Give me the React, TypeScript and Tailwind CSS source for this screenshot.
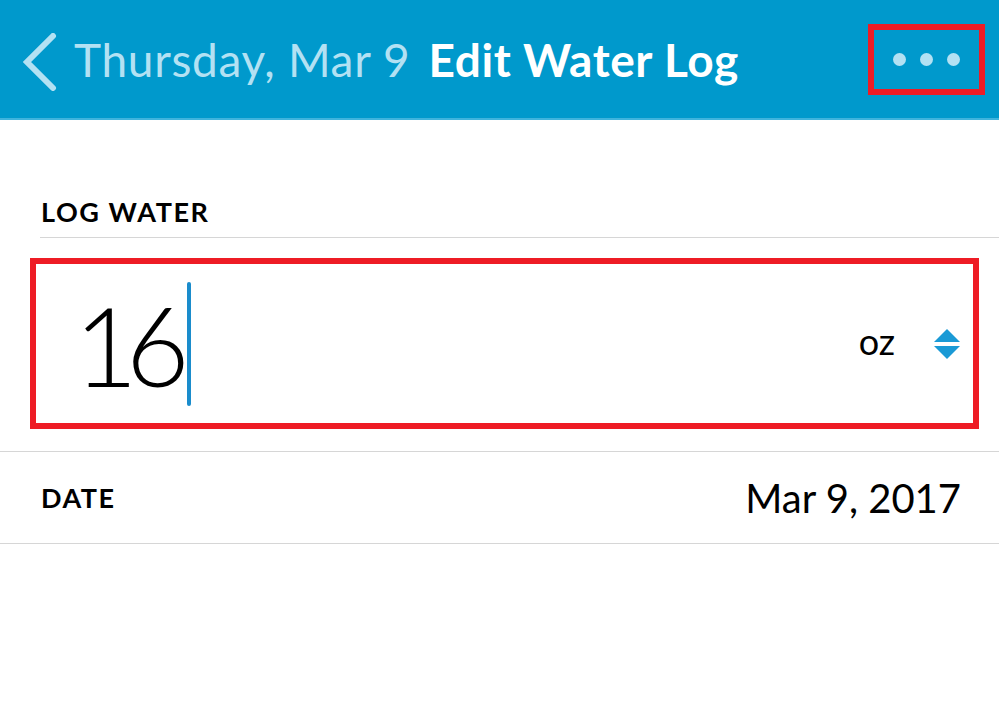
import React from "react";

export default function App() {
  return (
    <div className="w-[999px] h-[710px] bg-white overflow-hidden font-['Lato','Liberation_Sans',sans-serif]">
      {/* Top bar */}
      <div className="h-[120px] bg-[#0099cc] border-b-2 border-[#3fb4dd] flex items-center">
        <svg width="36" height="58" viewBox="0 0 36 58" className="ml-[21px] mt-[6px]">
          <path d="M32 3 L6 29 L32 55" fill="none" stroke="#b3e1f3" strokeWidth="6" strokeLinecap="round" />
        </svg>
        <span className="ml-[17px] text-[46px] text-[#b3e1f3] tracking-[0.7px]">Thursday, Mar 9</span>
        <span className="ml-[18px] text-[46px] font-bold text-white tracking-[0.6px]">Edit Water Log</span>
        <div className="ml-auto mr-[14px] w-[117px] h-[71px] border-[6px] border-[#ee1c25] flex items-center justify-center gap-[14px]">
          <span className="w-[13px] h-[13px] rounded-full bg-[#b3e1f3]" />
          <span className="w-[13px] h-[13px] rounded-full bg-[#b3e1f3]" />
          <span className="w-[13px] h-[13px] rounded-full bg-[#b3e1f3]" />
        </div>
      </div>

      {/* Log water */}
      <div className="pl-[40px] pt-[78px]">
        <div className="pl-[1px] pb-[12px] border-b border-[#d6d6d6] text-[27px] font-bold text-black leading-none tracking-[1.6px]">
          LOG WATER
        </div>
      </div>

      <div className="mt-[20px] ml-[30px] w-[949px] h-[171px] border-[6px] border-[#ee1c25] flex items-center">
        <span className="ml-[38px] text-[110px] text-black leading-none tracking-[-12px] font-light">16</span>
        <span className="ml-[9px] w-[4px] h-[124px] rounded-full bg-[#1a8ccc]" />
        <span className="ml-auto text-[36px] text-black leading-none mb-[6px]">oz</span>
        <svg width="28" height="32" viewBox="0 0 28 32" className="ml-[38px] mr-[12px]">
          <path d="M14 1 L27 14 L1 14 Z" fill="#1a9ad6" />
          <path d="M1 18 L27 18 L14 31 Z" fill="#1a9ad6" />
        </svg>
      </div>

      {/* Date */}
      <div className="mt-[22px] h-[93px] border-t border-b border-[#d6d6d6] flex items-center pl-[41px] pr-[38px]">
        <span className="text-[27px] font-bold text-black leading-none tracking-[1.5px]">DATE</span>
        <span className="ml-auto text-[40px] text-black leading-none">Mar 9, 2017</span>
      </div>
    </div>
  );
}
